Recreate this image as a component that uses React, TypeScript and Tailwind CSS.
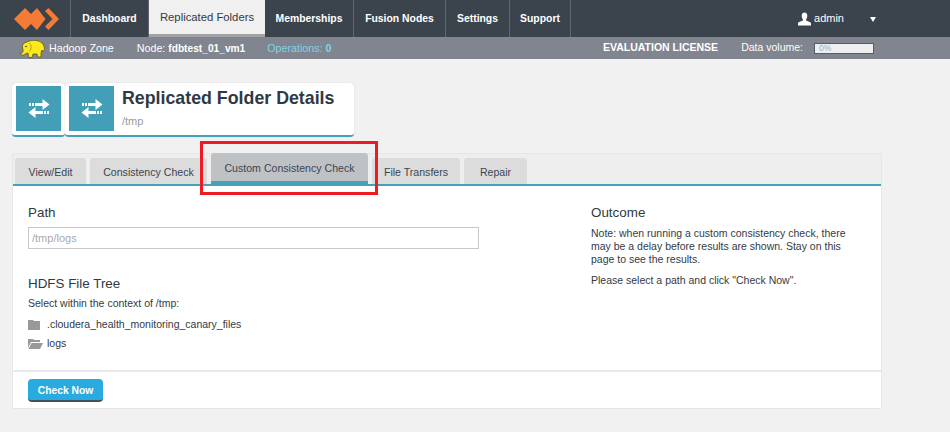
import React from "react";

function Arrows() {
  return (
    <svg width="22" height="19" viewBox="0 0 22 19" fill="#fff">
      <rect x="1" y="4" width="2" height="3" />
      <rect x="4" y="4" width="2" height="3" />
      <rect x="7" y="4" width="8" height="3" />
      <path d="M14.500 0l7 5.500-7 5.500z" />
      <rect x="7" y="12" width="8" height="3" />
      <rect x="16" y="12" width="2" height="3" />
      <rect x="19" y="12" width="2" height="3" />
      <path d="M7.500 8L0.500 13.500 7.500 19z" />
    </svg>
  );
}

function Logo() {
  return (
    <svg width="45" height="22" viewBox="0 0 45 22" fill="#f47b35">
      <path d="M0 11L11 0l6 6 6-6 8.500 11L23 22l-6-6-6 6z" />
      <path d="M31 3l3.500-3L45 11 34.500 22 31 18.500 38.500 11z" />
    </svg>
  );
}

function Elephant() {
  return (
    <svg width="25" height="18" viewBox="0 0 25 18">
      <path
        d="M8 1.500C12-.500 19 0 22 3c2 2 3 5 2 8l-1 1-1-2-1 3 0 4h-3.500l-.5-3h-4l-1 3.500H8.500l-.5-4.500c-2 0-3 1.500-4.500 2C1.500 15.500 0 14.500 .500 13c1 .5 2 0 2.500-1.500C3.500 9 2 8 2.500 5.500 3 3.500 5 2.500 8 1.500z"
        fill="#fbe91d"
        stroke="#5e5717"
        strokeWidth="0.800"
      />
      <circle cx="6" cy="6.500" r="0.800" fill="#333" />
      <path d="M9 3c2.500 1.500 3 5 .5 8.500" fill="none" stroke="#9c8f18" strokeWidth="0.800" />
    </svg>
  );
}

function NavItem({ label, active, className }: { label: string; active?: boolean; className: string }) {
  return (
    <div
      className={
        "flex h-full items-center justify-center " +
        className +
        (active
          ? " border-b-[3px] border-b-[#a3a3a3] bg-[#f0f0f0] pt-[1px] text-[11.300px] text-[#333a44]"
          : " border-r border-[#5f666f] text-[10.400px] font-bold text-white")
      }
    >
      {label}
    </div>
  );
}

function Tab({ label, className }: { label: string; className: string }) {
  return (
    <div className={"mr-[4px] flex h-[26px] shrink-0 items-center justify-center rounded-t-[3px] bg-[#dcdcdc] pt-[3px] text-[10.600px] text-[#3b4552] " + className}>
      {label}
    </div>
  );
}

export default function App() {
  return (
    <div className="relative h-[432px] w-[950px] overflow-hidden bg-[#f1f1f1] font-['Liberation_Sans',Arial,sans-serif] text-[#333a44]">
      <div className="flex h-[37px] items-center bg-[#3b434d]">
        <div className="flex h-full w-[71px] items-center pl-[14px] border-r border-[#5f666f]">
          <Logo />
        </div>
        <NavItem label="Dashboard" className="w-[78px]" />
        <NavItem label="Replicated Folders" active className="w-[116px]" />
        <NavItem label="Memberships" className="w-[89px]" />
        <NavItem label="Fusion Nodes" className="w-[92px]" />
        <NavItem label="Settings" className="w-[64px]" />
        <NavItem label="Support" className="w-[61px]" />
        <div className="ml-auto flex items-center pr-[73px] text-[11px] text-white">
          <svg width="13" height="14" viewBox="0 0 14 14" fill="#fff" className="mr-[3px]">
            <path d="M7 0c2 0 3 1.500 3 3.500S9 7.500 8.500 8c0 1 4.500 1.500 5.500 3.500V14H0v-2.500C1 9.500 5.500 9 5.500 8 5 7.500 4 5.500 4 3.500S5 0 7 0z" />
          </svg>
          <span>admin</span>
          <svg width="8" height="6" viewBox="0 0 8 6" fill="#fff" className="ml-[25px]">
            <path d="M1 1h6L4 6z" />
          </svg>
        </div>
      </div>

      <div className="flex h-[22px] items-center bg-[#80858f] text-[10.700px] text-white">
        <div className="ml-[20px] w-[29px] pt-[1px]">
          <Elephant />
        </div>
        <span>Hadoop Zone</span>
        <span className="ml-[23px]">
          Node: <span className="text-[10.200px] font-bold">fdbtest_01_vm1</span>
        </span>
        <span className="ml-[22px] text-[#7fd3e6]">
          Operations: <span className="font-bold">0</span>
        </span>
        <span className="ml-auto text-[10.500px] font-bold">EVALUATION LICENSE</span>
        <span className="ml-[23px] text-[10.500px]">Data volume:</span>
        <div className="mr-[76px] ml-[11px] mt-[1px] flex h-[11px] w-[60px] items-center border border-[#555c66] bg-[#efefef] pl-[4px] text-[8.500px] text-[#7fb8cc]">
          0%
        </div>
      </div>

      <div className="ml-[12px] mt-[24px] flex h-[54px] w-[342px]">
        <div className="h-full w-[53px] shrink-0 rounded-[4px] border-b-2 border-b-[#44a1ba] bg-white pl-[4px] pt-[3px] shadow-[0_0_1px_#bbb]">
          <div className="flex h-[45px] w-[45px] items-center justify-center bg-[#429fb7]">
            <Arrows />
          </div>
        </div>
        <div className="flex h-full flex-1 rounded-[4px] border-b-2 border-b-[#44a1ba] bg-white pl-[4px] pt-[3px] shadow-[0_0_1px_#bbb]">
          <div className="flex h-[45px] w-[45px] shrink-0 items-center justify-center bg-[#429fb7]">
            <Arrows />
          </div>
          <div className="ml-[8px]">
            <div className="text-[17.800px] font-bold leading-[24px] text-[#2f3944]">Replicated Folder Details</div>
            <div className="mt-[3px] text-[11px] text-[#999]">/tmp</div>
          </div>
        </div>
      </div>

      <div className="ml-[12px] mt-[16px] h-[256px] w-[870px] rounded-[2px] border border-[#e6e6e6] bg-[#eeeeee]">
        <div className="flex h-[32px] items-end border-b-2 border-b-[#44a1ba] pl-[2px]">
          <Tab label="View/Edit" className="w-[71px]" />
          <Tab label="Consistency Check" className="w-[117px]" />
          <div className="mr-[4px] h-[31px] w-[157px] shrink-0 rounded-t-[3px] border-b-[3px] border-b-[#44a1ba] bg-[#bfc2c5] pt-[8px] text-center text-[10.600px] text-[#3b4552]">
            Custom Consistency Check
          </div>
          <Tab label="File Transfers" className="w-[88px]" />
          <Tab label="Repair" className="w-[63px]" />
        </div>

        <div className="flex h-[184px] bg-white pl-[15px] pt-[19px]">
          <div className="w-[563px]">
            <div className="text-[13.400px] leading-[15px] text-[#2f3944]">Path</div>
            <div className="mt-[7px] flex h-[22px] w-[451px] items-center border border-[#c8c8c8] pl-[3px] text-[11px] text-[#aaa]">
              /tmp/logs
            </div>
            <div className="mt-[27px] text-[13.400px] leading-[15px] text-[#2f3944]">HDFS File Tree</div>
            <div className="mt-[6px] text-[10.500px] leading-[13px]">Select within the context of /tmp:</div>
            <div className="mt-[8px] flex h-[13px] items-center text-[10.500px]">
              <svg width="12" height="11" viewBox="0 0 12 11" fill="#999" className="mr-[7px]">
                <path d="M0 1h5l1 1h6v9H0z" />
              </svg>
              .cloudera_health_monitoring_canary_files
            </div>
            <div className="mt-[6px] flex h-[13px] items-center text-[10.500px]">
              <svg width="15" height="11" viewBox="0 0 15 11" fill="#999" className="mr-[4px]">
                <path d="M0 1h5l1 1h6v2H3L0 10zM3.500 5H15l-3 6H0.500z" />
              </svg>
              logs
            </div>
          </div>
          <div className="w-[270px]">
            <div className="text-[13.400px] leading-[15px] text-[#2f3944]">Outcome</div>
            <div className="mt-[7px] text-[10.500px] leading-[13px]">
              Note: when running a custom consistency check, there may be a delay before results are shown. Stay on this page to see the results.
            </div>
            <div className="mt-[8px] text-[10.500px] leading-[13px]">Please select a path and click "Check Now".</div>
          </div>
        </div>

        <div className="h-[38px] border-t-2 border-t-[#e8e8e8] bg-white pl-[15px] pt-[7px]">
          <div className="flex h-[23px] w-[75px] items-center justify-center rounded-[4px] border-b-2 border-b-[#41525f] bg-[#29abe2] pt-[3px] text-[10.300px] font-bold text-white">
            Check Now
          </div>
        </div>
      </div>

      <div className="absolute left-[200px] top-[141px] h-[54px] w-[178px] border-[3px] border-[#ed1c24]" />
    </div>
  );
}
